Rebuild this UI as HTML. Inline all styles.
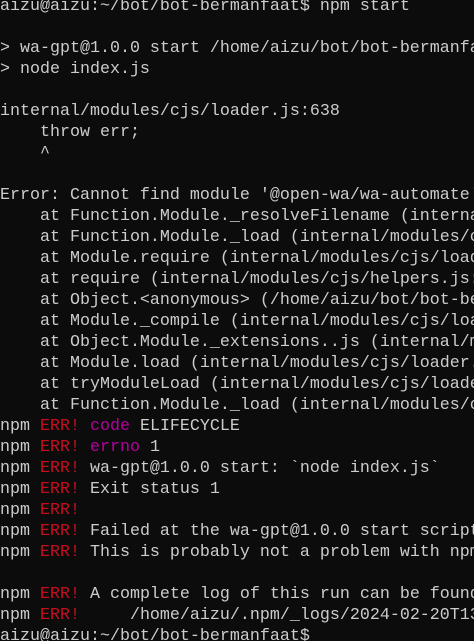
<!DOCTYPE html>
<html><head><meta charset="utf-8"><style>
html,body{margin:0;padding:0;background:#0c0c0c;width:474px;height:641px;overflow:hidden}
.w{position:relative;width:474px;height:641px;overflow:hidden}
pre{position:absolute;left:0;top:-4px;width:474px;overflow:hidden;margin:0;font-family:"Liberation Mono",monospace;font-size:16.67px;line-height:21px;color:#cccccc;white-space:pre}
.r{color:#c50f1f}.m{color:#b4009e}
</style></head><body><div class="w"><pre>aizu@aizu:~/bot/bot-bermanfaat$ npm start

&gt; wa-gpt@1.0.0 start /home/aizu/bot/bot-bermanfaat
&gt; node index.js

internal/modules/cjs/loader.js:638
    throw err;
    ^

Error: Cannot find module '@open-wa/wa-automate'
    at Function.Module._resolveFilename (internal/modules/cjs/loader.js:636:15)
    at Function.Module._load (internal/modules/cjs/loader.js:562:25)
    at Module.require (internal/modules/cjs/loader.js:692:17)
    at require (internal/modules/cjs/helpers.js:25:18)
    at Object.&lt;anonymous&gt; (/home/aizu/bot/bot-bermanfaat/index.js:1:1)
    at Module._compile (internal/modules/cjs/loader.js:778:30)
    at Object.Module._extensions..js (internal/modules/cjs/loader.js:789:10)
    at Module.load (internal/modules/cjs/loader.js:653:32)
    at tryModuleLoad (internal/modules/cjs/loader.js:593:12)
    at Function.Module._load (internal/modules/cjs/loader.js:585:3)
npm <span class="r">ERR!</span> <span class="m">code</span> ELIFECYCLE
npm <span class="r">ERR!</span> <span class="m">errno</span> 1
npm <span class="r">ERR!</span> wa-gpt@1.0.0 start: `node index.js`
npm <span class="r">ERR!</span> Exit status 1
npm <span class="r">ERR!</span>
npm <span class="r">ERR!</span> Failed at the wa-gpt@1.0.0 start script.
npm <span class="r">ERR!</span> This is probably not a problem with npm.

npm <span class="r">ERR!</span> A complete log of this run can be found in:
npm <span class="r">ERR!</span>     /home/aizu/.npm/_logs/2024-02-20T13_00_00_000Z-debug.log
aizu@aizu:~/bot/bot-bermanfaat$ </pre></div></body></html>
